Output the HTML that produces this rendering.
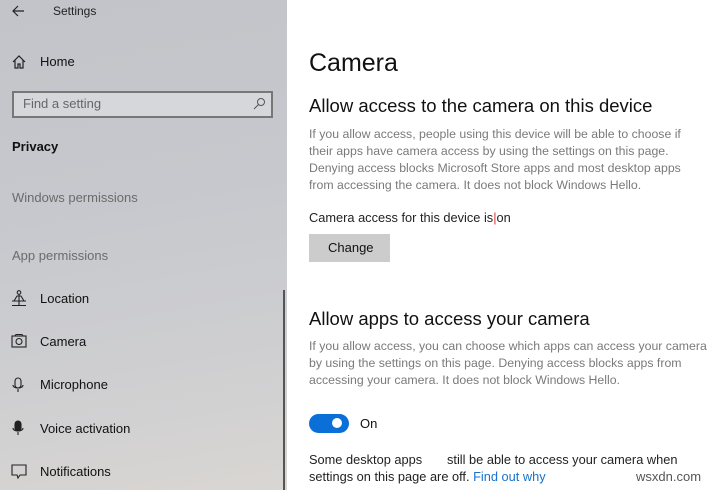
<!DOCTYPE html><html><head><style>
*{margin:0;padding:0;box-sizing:border-box}
body{width:714px;height:490px;overflow:hidden;font-family:"Liberation Sans",sans-serif;background:#fff;position:relative}
#sb{position:absolute;left:0;top:0;width:287px;height:490px;background:linear-gradient(170deg,#c2c4c9 0%,#c6c8cd 40%,#cfcfd1 75%,#d9d6d3 100%)}
.t{position:absolute;white-space:nowrap;line-height:1}
svg{position:absolute}
.m{left:309px;color:#222}
.g{color:#7a7a7a;font-size:12.3px}
</style></head><body>
<div id="sb">
<svg style="left:11px;top:4px" width="14" height="14" viewBox="0 0 14 14"><path d="M13 7H2M7 2L2 7l5 5" stroke="#222" fill="none" stroke-width="1.2"/></svg>
<div class="t" style="left:53px;top:5px;font-size:12px;color:#222">Settings</div>
<svg style="left:12px;top:55px" width="14" height="14" viewBox="0 0 14 14"><path d="M1 7L7 1l6 6M3 5v8h3V9h2v4h3V5" stroke="#222" fill="none" stroke-width="1.2"/></svg>
<div class="t" style="left:40px;top:55px;font-size:13px;color:#111">Home</div>
<div style="position:absolute;left:12px;top:91px;width:261px;height:27px;border:2px solid #777;background:#d6d7da"></div>
<div class="t" style="left:23px;top:97px;font-size:13px;color:#666">Find a setting</div>
<svg style="left:253px;top:97px" width="13" height="13" viewBox="0 0 13 13"><circle cx="8" cy="5" r="3.5" stroke="#555" fill="none"/><path d="M5.5 7.5L1 12" stroke="#555"/></svg>
<div class="t" style="left:12px;top:140px;font-size:13px;font-weight:bold;color:#111">Privacy</div>
<div class="t" style="left:12px;top:191px;font-size:13px;color:#6b6b6b">Windows permissions</div>
<div class="t" style="left:12px;top:249px;font-size:13px;color:#6b6b6b">App permissions</div>
<svg style="left:11px;top:290px" width="16" height="16" viewBox="0 0 16 16" fill="none" stroke="#222" stroke-width="1.1"><circle cx="8" cy="2.5" r="1.8"/><path d="M8 4.5v6M3 11l3-5h4l3 5H1h14M8 10.5v5M1 15.5h14"/></svg>
<div class="t" style="left:40px;top:292px;font-size:13px;color:#111">Location</div>
<svg style="left:11px;top:334px" width="16" height="14" viewBox="0 0 16 14" fill="none" stroke="#222" stroke-width="1.1"><rect x="1" y="2" width="14" height="11"/><circle cx="8" cy="7.5" r="3"/><path d="M4 2l1-1.5h6L12 2"/></svg>
<div class="t" style="left:40px;top:335px;font-size:13px;color:#111">Camera</div>
<svg style="left:12px;top:377px" width="12" height="16" viewBox="0 0 12 16" fill="none" stroke="#222" stroke-width="1.1"><rect x="3" y="1" width="6" height="10" rx="3"/><path d="M1 8c0 4 10 4 10 0M6 12v3"/></svg>
<div class="t" style="left:40px;top:378px;font-size:13px;color:#111">Microphone</div>
<svg style="left:12px;top:420px" width="12" height="16" viewBox="0 0 12 16" fill="#222" stroke="#222" stroke-width="1.1"><rect x="3" y="1" width="6" height="10" rx="3"/><path d="M1 8c0 4 10 4 10 0M6 12v3" fill="none"/></svg>
<div class="t" style="left:40px;top:422px;font-size:13px;color:#111">Voice activation</div>
<svg style="left:11px;top:464px" width="16" height="16" viewBox="0 0 16 16" fill="none" stroke="#222" stroke-width="1.1"><path d="M1 1h14v10H9l-2 3-1-3H1z"/></svg>
<div class="t" style="left:40px;top:465px;font-size:13px;color:#111">Notifications</div>
<div style="position:absolute;left:283px;top:290px;width:2px;height:200px;background:#555"></div>
</div>
<div class="t m" style="top:51px;font-size:25px;color:#111">Camera</div>
<div class="t m" style="top:97px;font-size:18.5px;color:#111">Allow access to the camera on this device</div>
<div class="t m g" style="top:126px;line-height:17px">If you allow access, people using this device will be able to choose if<br>their apps have camera access by using the settings on this page.<br>Denying access blocks Microsoft Store apps and most desktop apps<br>from accessing the camera. It does not block Windows Hello.</div>
<div class="t m" style="top:212px;font-size:12.8px">Camera access for this device is<span style="color:#d33">|</span>on</div>
<div style="position:absolute;left:309px;top:234px;width:81px;height:28px;background:#cccccc"></div>
<div class="t" style="left:328px;top:241px;font-size:13px;color:#111">Change</div>
<div class="t m" style="top:310px;font-size:18.5px;color:#111">Allow apps to access your camera</div>
<div class="t m g" style="top:338px;line-height:17px">If you allow access, you can choose which apps can access your camera<br>by using the settings on this page. Denying access blocks apps from<br>accessing your camera. It does not block Windows Hello.</div>
<div style="position:absolute;left:309px;top:414px;width:40px;height:19px;border-radius:10px;background:#0a6fd6"></div>
<div style="position:absolute;left:332px;top:418px;width:10px;height:10px;border-radius:50%;background:#fff"></div>
<div class="t" style="left:360px;top:417px;font-size:13px;color:#111">On</div>
<div class="t m" style="top:451px;font-size:12.8px;line-height:17px">Some desktop apps &nbsp;&nbsp;&nbsp;&nbsp;&nbsp; still be able to access your camera when<br>settings on this page are off. <span style="color:#1a73c9">Find out why</span></div>
<div class="t" style="left:636px;top:470px;font-size:13px;color:#555">wsxdn.com</div>
</body></html>
